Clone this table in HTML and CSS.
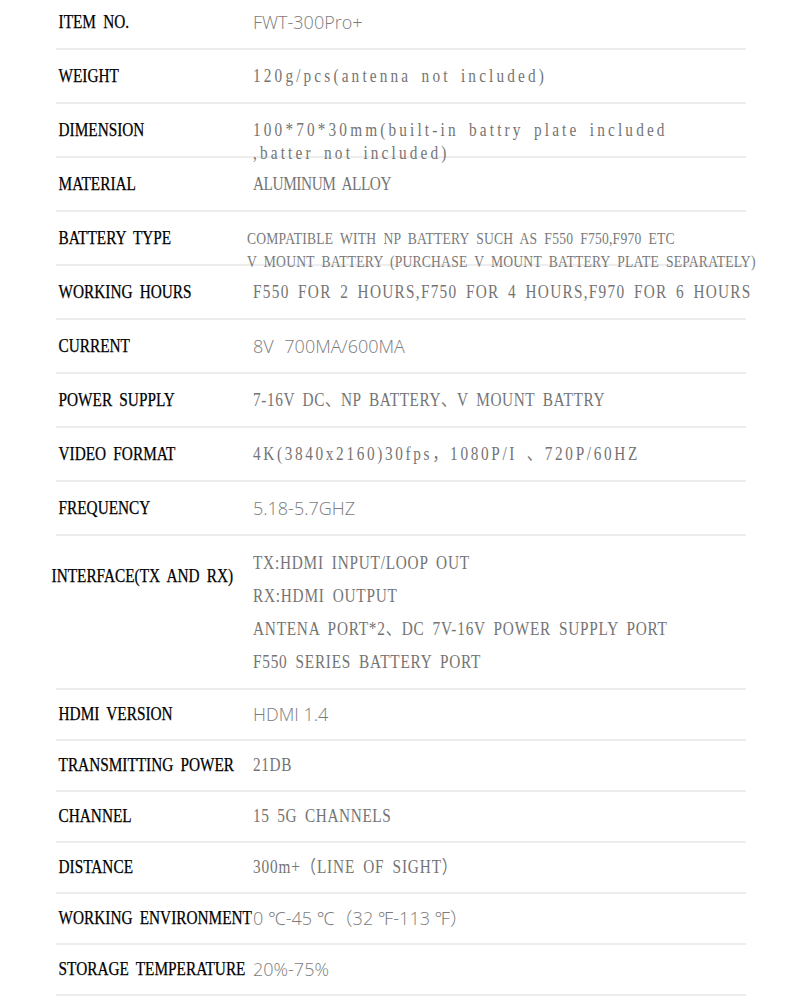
FILE: index.html
```html
<!DOCTYPE html>
<html lang="en">
<head>
<meta charset="utf-8">
<title>FWT-300Pro+ Specifications</title>
<link rel="stylesheet" href="styles.css">
</head>
<body>
<div class="specs">
  <div class="row">
    <div class="label">ITEM NO.</div>
    <div class="value value--sans">FWT-300Pro+</div>
  </div>
  <div class="row">
    <div class="label">WEIGHT</div>
    <div class="value value--lower">120g/pcs(antenna not included)</div>
  </div>
  <div class="row">
    <div class="label">DIMENSION</div>
    <div class="value value--lower value--stack">
      <span class="line">100*70*30mm(built-in battry plate included</span>
      <span class="line">,batter not included)</span>
    </div>
  </div>
  <div class="row">
    <div class="label">MATERIAL</div>
    <div class="value value--tight">ALUMINUM ALLOY</div>
  </div>
  <div class="row">
    <div class="label">BATTERY TYPE</div>
    <div class="value value--small value--stack">
      <span class="line">COMPATIBLE WITH NP BATTERY SUCH AS F550 F750,F970 ETC</span>
      <span class="line">V MOUNT BATTERY (PURCHASE V MOUNT BATTERY PLATE SEPARATELY)</span>
    </div>
  </div>
  <div class="row">
    <div class="label">WORKING HOURS</div>
    <div class="value value--hours">F550 FOR 2 HOURS,F750 FOR 4 HOURS,F970 FOR 6 HOURS</div>
  </div>
  <div class="row">
    <div class="label">CURRENT</div>
    <div class="value value--sans value--spaced">8V 700MA/600MA</div>
  </div>
  <div class="row">
    <div class="label">POWER SUPPLY</div>
    <div class="value value--plain">7-16V DC、NP BATTERY、V MOUNT BATTRY</div>
  </div>
  <div class="row">
    <div class="label">VIDEO FORMAT</div>
    <div class="value value--video">4K(3840x2160)30fps，1080P/I 、720P/60HZ</div>
  </div>
  <div class="row">
    <div class="label">FREQUENCY</div>
    <div class="value value--sans">5.18-5.7GHZ</div>
  </div>
  <div class="row row--tall">
    <div class="label label--wide">INTERFACE(TX AND RX)</div>
    <div class="value value--list">
      <span class="line">TX:HDMI INPUT/LOOP OUT</span>
      <span class="line">RX:HDMI OUTPUT</span>
      <span class="line">ANTENA PORT*2、DC 7V-16V POWER SUPPLY PORT</span>
      <span class="line">F550 SERIES BATTERY PORT</span>
    </div>
  </div>
  <div class="row row--short">
    <div class="label">HDMI VERSION</div>
    <div class="value value--sans">HDMI 1.4</div>
  </div>
  <div class="row row--short">
    <div class="label">TRANSMITTING POWER</div>
    <div class="value value--plain">21DB</div>
  </div>
  <div class="row row--short">
    <div class="label">CHANNEL</div>
    <div class="value value--plain">15 5G CHANNELS</div>
  </div>
  <div class="row row--short">
    <div class="label">DISTANCE</div>
    <div class="value value--wide">300m+（LINE OF SIGHT）</div>
  </div>
  <div class="row row--short">
    <div class="label">WORKING ENVIRONMENT</div>
    <div class="value value--sans">0 ℃-45 ℃（32 ℉-113 ℉）</div>
  </div>
  <div class="row row--short">
    <div class="label">STORAGE TEMPERATURE</div>
    <div class="value value--sans">20%-75%</div>
  </div>
</div>
</body>
</html>
```

FILE: styles.css
```css
html, body {
  margin: 0;
  padding: 0;
  background: #ffffff;
}

body {
  font-family: "Liberation Serif", "Noto Sans CJK SC", serif;
}

.specs {
  margin: -4px 0 0 56px;
  width: 690px;
}

.row {
  display: flex;
  align-items: flex-start;
  box-sizing: border-box;
  height: 54px;
  padding-top: 15px;
  border-bottom: 2px solid #ededed;
}

.row--short {
  height: 51px;
  padding-top: 13px;
}

.row--tall {
  height: 154px;
  padding-top: 11px;
}

/* condensed serif, like the half-width Song face of the original */
.label,
.value {
  font-family: "Liberation Serif", "Noto Sans CJK SC", serif;
  font-size: 18px;
  line-height: 22px;
  word-spacing: 4px;
  white-space: nowrap;
  transform: scaleX(0.85);
  transform-origin: 0 50%;
}

.label {
  flex: none;
  box-sizing: border-box;
  width: 197px;
  padding-left: 3px;
  color: #000000;
  -webkit-text-stroke: 0.25px #000000;
}

.label--wide {
  margin-left: -7px;
  margin-right: 7px;
  padding-top: 18px;
}

.value {
  color: #747474;
}

.value .line {
  display: block;
}

.value--stack {
  line-height: 23px;
}

.value--plain {
  letter-spacing: 0.7px;
}

.value--wide {
  letter-spacing: 1px;
}

.value--lower {
  letter-spacing: 3.7px;
}

.value--tight {
  letter-spacing: -0.5px;
}

.value--hours {
  letter-spacing: 1.5px;
}

.value--video {
  letter-spacing: 3.1px;
}

.value--small {
  margin-left: -6px;
  font-size: 16px;
  letter-spacing: 0.25px;
  color: #7a7a7a;
}

.value--list {
  line-height: 33px;
  letter-spacing: 0.9px;
}

.value--sans {
  font-family: "Open Sans", "Noto Sans", "Noto Sans CJK SC", sans-serif;
  font-size: 18px;
  font-weight: 300;
  line-height: 22px;
  word-spacing: 0;
  letter-spacing: 0;
  transform: none;
  color: #7c7c7c;
}

.value--spaced {
  word-spacing: 6px;
}
```
